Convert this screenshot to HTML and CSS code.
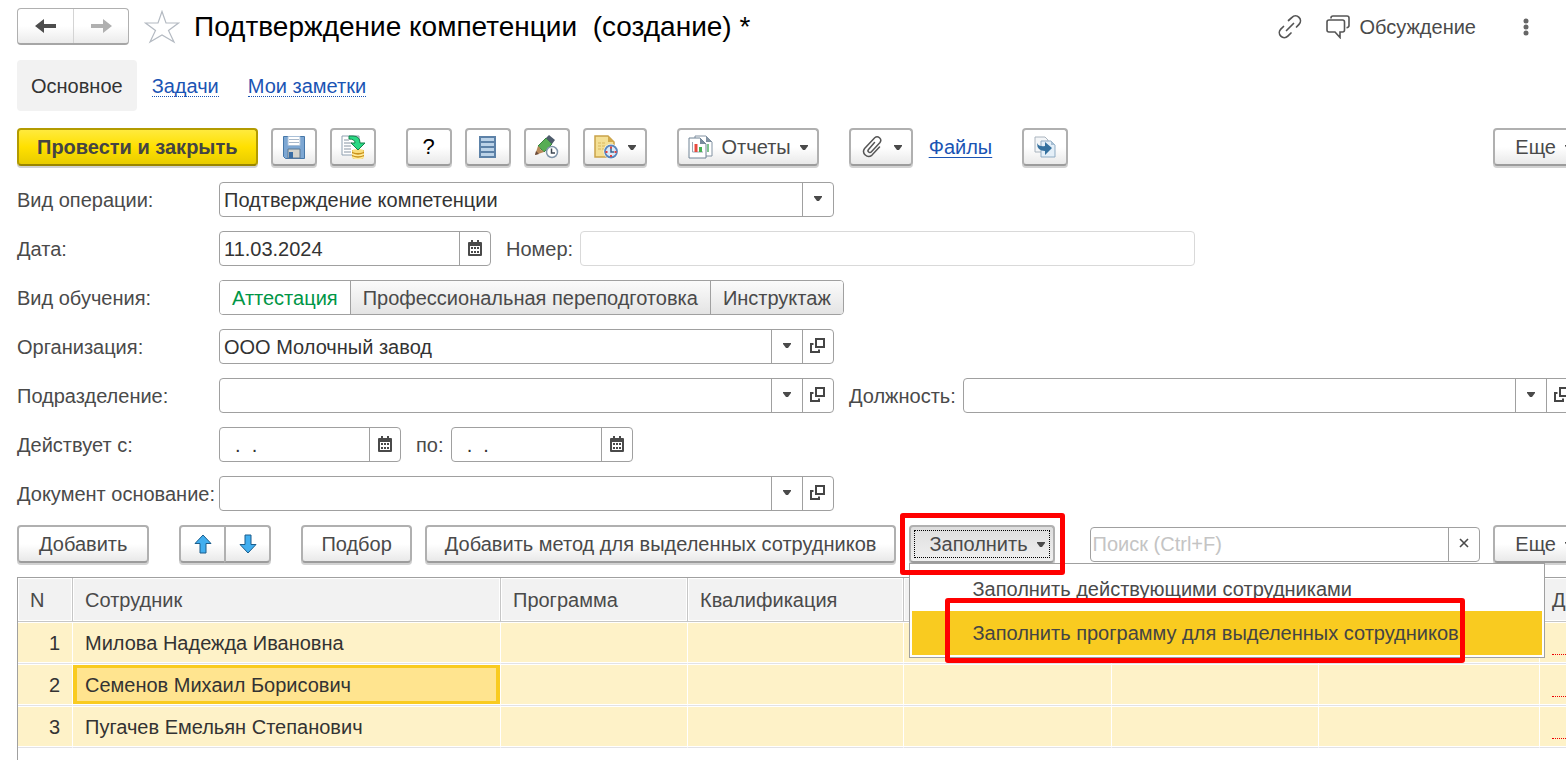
FILE: index.html
```html
<!DOCTYPE html>
<html lang="ru">
<head>
<meta charset="utf-8">
<title>Подтверждение компетенции (создание)</title>
<link rel="stylesheet" href="styles.css">
</head>
<body>
<svg class="sprite" aria-hidden="true">
  <symbol id="caret" viewBox="0 0 8 5"><path d="M0 0h8v1L5 5H3L0 1z" fill="#4a4a4a"/></symbol>
  <symbol id="open" viewBox="0 0 16 16"><path d="M6 1h8v8H6z" fill="none" stroke="#454545" stroke-width="2"/><path d="M3.500 6H1v8h8v-2.500" fill="none" stroke="#454545" stroke-width="2"/></symbol>
  <symbol id="calendar" viewBox="0 0 14 16"><path d="M1 2h2V0h2v2h4V0h2v2h2q1 0 1 1v12q0 1-1 1H1q-1 0-1-1V3q0-1 1-1z" fill="#4a4a4a"/><path d="M2 6h10v8H2z" fill="#fff"/><path d="M3 7h2v2H3zM6 7h2v2H6zM9 7h2v2H9zM3 11h2v2H3zM6 11h2v2H6zM9 11h2v2H9z" fill="#4a4a4a"/></symbol>
</svg>
<main class="page">
  <header class="titlebar">
    <div class="history">
      <button class="history-btn" type="button" aria-label="Назад"><svg width="21" height="16" viewBox="0 0 21 16"><path d="M0 8 9 1v5h12v4H9v5z" fill="#4d4d4d"/></svg></button>
      <button class="history-btn" type="button" aria-label="Вперед"><svg width="21" height="16" viewBox="0 0 21 16"><path d="M21 8 12 1v5H0v4h12v5z" fill="#b0b0b0"/></svg></button>
    </div>
    <button class="plain star" type="button" aria-label="В избранное"><svg width="36" height="34" viewBox="0 0 36 34"><path d="M18 1.500 22 13h12.500L24.500 20.500 30 32 18 25 6 32l5.500-11.500L1.500 13H14z" fill="#fff" stroke="#b4bac2" stroke-width="1.200"/></svg></button>
    <h1 class="title">Подтверждение компетенции  (создание) *</h1>
    <div class="title-tools">
      <button class="plain" type="button" aria-label="Получить ссылку"><svg width="24" height="24" viewBox="0 0 24 24" fill="none" stroke="#555" stroke-width="1.700" stroke-linecap="round"><path d="M8.500 15.500l7-7M10.500 5.500l3.500-3.200a4.700 4.700 0 0 1 7 7L18.500 12M5.500 11.500l-2.700 2.600a4.700 4.700 0 0 0 7 7L13 18"/></svg></button>
      <button class="plain discuss" type="button"><svg width="24" height="24" viewBox="0 0 24 24" fill="none" stroke="#555" stroke-width="1.600"><path d="M5 3.500V3q0-2 2-2h14q2 0 2 2v7.500q0 2-2.500 2.200M3 5h13.500q2 0 2 2v8q0 2-2 2H14v5.500L9 17H3q-2 0-2-2V7q0-2 2-2z"/></svg><span>Обсуждение</span></button>
      <button class="plain kebab" type="button" aria-label="Меню"><svg width="6" height="18" viewBox="0 0 6 18" fill="#666"><circle cx="3" cy="3" r="2.500"/><circle cx="3" cy="9" r="2.500"/><circle cx="3" cy="15" r="2.500"/></svg></button>
    </div>
  </header>

  <nav class="tabs">
    <span class="tab-active">Основное</span>
    <a class="tab-link" href="#tasks">Задачи</a>
    <a class="tab-link" href="#notes">Мои заметки</a>
  </nav>

  <div class="toolbar">
    <div class="group">
      <button class="btn btn-tight btn-primary" type="button">Провести и закрыть</button>
      <button class="btn btn-icon" type="button" aria-label="Записать"><svg width="22" height="23" viewBox="0 0 22 23"><path d="M.500.500h21v22H2.500l-2-2z" fill="#7da7d3" stroke="#4677a8"/><path d="M5 .500h12v9H5z" fill="#fff" stroke="#a9c0d8"/><path d="M6 3.500h10M6 6.500h10" stroke="#a9b9cb"/><path d="M5 13h12v9H5z" fill="#d3d3cd" stroke="#5d7893"/><path d="M6 16h4v6H6z" fill="#3a6ea5"/></svg></button>
      <button class="btn btn-icon" type="button" aria-label="Провести"><svg width="26" height="26" viewBox="0 0 26 26"><path d="M2 2h17v19H2z" fill="#fff" stroke="#8fa0b0"/><path d="M4 6h5M4 9h8M4 12h7M4 15h7M4 18h7" stroke="#8794a2"/><path d="M12 16v7q0 2 6 2t6-2v-7z" fill="#c9921c"/><ellipse cx="18" cy="17" rx="6" ry="2" fill="#f9dd7c"/><path d="M12 20q6 3 12 0M12 23q6 3 12 0" fill="none" stroke="#ffeb9a" stroke-width="1.500"/><path d="M9 2h4q7 0 7 7h5l-7 7-7-7h4q0-4-6-4z" fill="#29d984" stroke="#15804a"/></svg></button>
    </div>
    <div class="group">
      <button class="btn btn-icon help" type="button">?</button>
      <button class="btn btn-icon" type="button" aria-label="Список"><svg width="17" height="22" viewBox="0 0 17 22"><path d="M1 1h15v20H1z" fill="#bcd3e8" stroke="#5d82a8" stroke-width="2"/><path d="M1 6h15M1 11h15M1 16h15" stroke="#5d82a8" stroke-width="2"/></svg></button>
      <button class="btn btn-icon" type="button" aria-label="Подписать"><svg width="25" height="24" viewBox="0 0 25 24"><path d="M4 11 12 3l6 6-8 8z" fill="#56ad55" stroke="#388540"/><path d="m12 3 3-3 6 5-3 4z" fill="#4d5b6b"/><path d="M4 11 1 20l9-3q-1-2-3-2-1-3-3-4z" fill="#b98a5a"/><path d="m1 20 1-4 3 3z" fill="#6a4a3a"/><circle cx="18" cy="17" r="5.500" fill="#fff" stroke="#8095aa" stroke-width="1.500"/><path d="M17.500 13.500V18H21" fill="none" stroke="#3c4651" stroke-width="1.500"/></svg></button>
      <button class="btn btn-menu" type="button" aria-label="Напоминание"><svg width="25" height="24" viewBox="0 0 25 24"><path d="M1 1h13l6 6v15H1z" fill="#f4e096" stroke="#c9a24a" stroke-width="1.500"/><path d="M14 1v6h6z" fill="#d2a94b"/><path d="M4 8h8M4 11h7M4 14h6" stroke="#d8b65c" stroke-dasharray="3 1"/><circle cx="17" cy="16.500" r="7.500" fill="#fff"/><circle cx="17" cy="16.500" r="6" fill="#dce9f8" stroke="#5886bc" stroke-width="1.800"/><path d="M17 13v4h3" fill="none" stroke="#36618f" stroke-width="1.500"/><path d="M16 11.500h2v2h-2zM16 20h2v2h-2zM11.500 16h2v2h-2zM20.500 16h2v2h-2z" fill="#e04343"/></svg><svg class="caret"><use href="#caret"/></svg></button>
    </div>
    <div class="group">
      <button class="btn btn-menu" type="button"><svg width="25" height="24" viewBox="0 0 25 24"><path d="M7 1h11l6 6v14H7z" fill="#fff" stroke="#8292a2"/><path d="M18 1v6h6z" fill="#8292a2"/><path d="M20 9v8" stroke="#7fc38f" stroke-width="2"/><path d="M1 3h11l6 6v14H1z" fill="#fff" stroke="#6f8294"/><path d="M12 3v6h6z" fill="#7a8c9e"/><path d="M4.500 7v10H15" fill="none" stroke="#9aa6b2"/><path d="M8 9v8" stroke="#e84a3e" stroke-width="3"/><path d="M12.500 12v5" stroke="#47b153" stroke-width="3"/></svg><span>Отчеты</span><svg class="caret"><use href="#caret"/></svg></button>
    </div>
    <div class="group">
      <button class="btn btn-menu" type="button" aria-label="Присоединенные файлы"><svg width="25" height="24" viewBox="0 0 25 24" fill="none" stroke="#555" stroke-width="1.500" stroke-linecap="round"><path d="M14.500 7.500 8.500 14.500a1.800 1.800 0 0 0 2.700 2.400L20 7.500a3.600 3.600 0 0 0-5.300-4.800L4.600 13.500a5 5 0 0 0 7.200 6.800L19.500 12"/></svg><svg class="caret"><use href="#caret"/></svg></button>
      <a class="files" href="#files">Файлы</a>
    </div>
    <button class="btn btn-icon" type="button" aria-label="Создать на основании"><svg width="22" height="22" viewBox="0 0 22 22"><path d="M1 1h10l3 3v12H1z" fill="#f4f6f8" stroke="#aab4be"/><path d="M7 5h10l4 4v12H7z" fill="#e4eff8" stroke="#8fabc3"/><path d="M17 5v4h4z" fill="#a7bfd4"/><path d="M3 7q2 4 8 3V6l7 6-7 7v-4Q3 15 3 7z" fill="#35719f"/></svg></button>
    <button class="btn btn-menu btn-more" type="button"><span>Еще</span><svg class="caret"><use href="#caret"/></svg></button>
  </div>

  <form class="form">
    <div class="row">
      <label class="label" for="operation">Вид операции:</label>
      <div class="field field-wide">
        <select class="control" id="operation"><option>Подтверждение компетенции</option></select>
        <span class="addon"><svg class="caret"><use href="#caret"/></svg></span>
      </div>
    </div>
    <div class="row">
      <label class="label" for="date">Дата:</label>
      <div class="field field-date">
        <input class="control" id="date" type="text" value="11.03.2024">
        <button class="addon" type="button" aria-label="Выбрать дату"><svg width="14" height="16"><use href="#calendar"/></svg></button>
      </div>
      <label class="label-next" for="number">Номер:</label>
      <div class="field field-wide field-muted"><input class="control" id="number" type="text"></div>
    </div>
    <div class="row">
      <span class="label" id="kind">Вид обучения:</span>
      <div class="segments" role="radiogroup" aria-labelledby="kind">
        <label class="segment"><input class="segment-input" type="radio" name="kind" checked><span class="segment-text">Аттестация</span></label>
        <label class="segment"><input class="segment-input" type="radio" name="kind"><span class="segment-text">Профессиональная переподготовка</span></label>
        <label class="segment"><input class="segment-input" type="radio" name="kind"><span class="segment-text">Инструктаж</span></label>
      </div>
    </div>
    <div class="row">
      <label class="label" for="org">Организация:</label>
      <div class="field field-wide">
        <input class="control" id="org" type="text" value="ООО Молочный завод">
        <button class="addon" type="button" aria-label="Выбрать"><svg class="caret"><use href="#caret"/></svg></button>
        <button class="addon" type="button" aria-label="Открыть"><svg width="16" height="16"><use href="#open"/></svg></button>
      </div>
    </div>
    <div class="row">
      <label class="label" for="dept">Подразделение:</label>
      <div class="field field-wide">
        <input class="control" id="dept" type="text">
        <button class="addon" type="button" aria-label="Выбрать"><svg class="caret"><use href="#caret"/></svg></button>
        <button class="addon" type="button" aria-label="Открыть"><svg width="16" height="16"><use href="#open"/></svg></button>
      </div>
      <label class="label-next" for="post">Должность:</label>
      <div class="field field-wide">
        <input class="control" id="post" type="text">
        <button class="addon" type="button" aria-label="Выбрать"><svg class="caret"><use href="#caret"/></svg></button>
        <button class="addon" type="button" aria-label="Открыть"><svg width="16" height="16"><use href="#open"/></svg></button>
      </div>
    </div>
    <div class="row">
      <label class="label" for="from">Действует с:</label>
      <div class="field field-period">
        <input class="control" id="from" type="text" value="  .  .">
        <button class="addon" type="button" aria-label="Выбрать дату"><svg width="14" height="16"><use href="#calendar"/></svg></button>
      </div>
      <label class="label-next" for="to">по:</label>
      <div class="field field-period">
        <input class="control" id="to" type="text" value="  .  .">
        <button class="addon" type="button" aria-label="Выбрать дату"><svg width="14" height="16"><use href="#calendar"/></svg></button>
      </div>
    </div>
    <div class="row">
      <label class="label" for="base">Документ основание:</label>
      <div class="field field-wide">
        <input class="control" id="base" type="text">
        <button class="addon" type="button" aria-label="Выбрать"><svg class="caret"><use href="#caret"/></svg></button>
        <button class="addon" type="button" aria-label="Открыть"><svg width="16" height="16"><use href="#open"/></svg></button>
      </div>
    </div>
  </form>

  <div class="toolbar toolbar-table">
    <button class="btn" type="button">Добавить</button>
    <div class="pair">
      <button class="btn btn-arrow" type="button" aria-label="Вверх"><svg width="18" height="20" viewBox="0 0 18 20"><path d="M9 1 17 9.500h-5V19H6V9.500H1z" fill="#41aeef" stroke="#1b5d8c" stroke-linejoin="round"/></svg></button>
      <button class="btn btn-arrow" type="button" aria-label="Вниз"><svg width="18" height="20" viewBox="0 0 18 20"><path d="M9 19 1 10.500h5V1h6v9.500h5z" fill="#41aeef" stroke="#1b5d8c" stroke-linejoin="round"/></svg></button>
    </div>
    <div class="group">
      <button class="btn btn-tight" type="button">Подбор</button>
      <button class="btn btn-tight" type="button">Добавить метод для выделенных сотрудников</button>
      <div class="fill">
        <button class="btn btn-menu btn-pressed" type="button" aria-expanded="true"><span>Заполнить</span><svg class="caret"><use href="#caret"/></svg></button>
        <div class="menu" role="menu">
          <button class="menu-item" type="button" role="menuitem">Заполнить действующими сотрудниками</button>
          <button class="menu-item menu-item-active" type="button" role="menuitem">Заполнить программу для выделенных сотрудников</button>
          <div class="mark mark-item"></div>
        </div>
        <div class="mark mark-button"></div>
      </div>
    </div>
    <div class="field search">
      <input class="control" type="text" placeholder="Поиск (Ctrl+F)" aria-label="Поиск">
      <button class="addon" type="button" aria-label="Очистить"><svg width="10" height="10" viewBox="0 0 10 10"><path d="m1 1 8 8M9 1 1 9" stroke="#4a4a4a" stroke-width="1.600"/></svg></button>
    </div>
    <button class="btn btn-menu btn-more" type="button"><span>Еще</span><svg class="caret"><use href="#caret"/></svg></button>
  </div>

  <div class="grid">
    <table class="table">
      <colgroup><col class="c-num"><col class="c-name"><col class="c-prog"><col class="c-qual"><col class="c-a"><col class="c-b"><col class="c-c"><col class="c-doc"></colgroup>
      <thead><tr><th>N</th><th>Сотрудник</th><th>Программа</th><th>Квалификация</th><th></th><th></th><th></th><th>До</th></tr></thead>
      <tbody>
        <tr><td class="num">1</td><td>Милова Надежда Ивановна</td><td></td><td></td><td></td><td></td><td></td><td><div class="required"></div></td></tr>
        <tr><td class="num">2</td><td class="current">Семенов Михаил Борисович</td><td></td><td></td><td></td><td></td><td></td><td><div class="required"></div></td></tr>
        <tr><td class="num">3</td><td>Пугачев Емельян Степанович</td><td></td><td></td><td></td><td></td><td></td><td><div class="required"></div></td></tr>
      </tbody>
    </table>
  </div>
</main>
</body>
</html>
```
FILE: styles.css
```css
* { box-sizing: border-box; }

body {
  margin: 0;
  background: #fff;
  color: #4a4a4a;
  font: 20px/24px "Liberation Sans", Arial, sans-serif;
}

button, input, select { font: inherit; color: inherit; }
svg { display: block; flex: none; }
.sprite { position: absolute; width: 0; height: 0; }
.caret { width: 8px; height: 5px; }

.page {
  display: flex;
  flex-direction: column;
  min-height: 100vh;
  padding: 8px 0 0 17px;
  overflow: hidden;
}

.plain { padding: 0; border: 0; background: none; }

/* Title bar */
.titlebar { display: flex; align-items: center; height: 37px; padding-right: 37px; }
.history {
  display: flex;
  height: 37px;
  border: 1px solid #b0b0b0;
  border-bottom: 2px solid #a6a6a6;
  border-radius: 4px;
  background: linear-gradient(#fff 50%, #ebebeb);
}
.history-btn {
  display: flex;
  align-items: center;
  justify-content: center;
  width: 55px;
  padding: 0;
  border: 0;
  background: none;
}
.history-btn + .history-btn { border-left: 1px solid #d4d4d4; }
.star { margin: 0 14px 0 15px; }
.title { margin: 0; color: #000; font-size: 28px; font-weight: 400; line-height: 32px; white-space: pre; }
.title-tools { display: flex; align-items: center; gap: 24px; margin-left: auto; }
.discuss { display: flex; align-items: center; gap: 9px; }
.kebab { margin-left: 23px; }

/* Section tabs */
.tabs { display: flex; align-items: center; gap: 29px; margin-top: 15px; }
.tab-active { margin-right: -14px; padding: 14px 14px 13px; border-radius: 4px; background: #f2f2f2; color: #333; }
.tab-link { padding-top: 1px; border-bottom: 1px dotted #1a54b4; color: #1a54b4; line-height: 20px; text-decoration: none; }

/* Command bars */
.toolbar { display: flex; align-items: center; gap: 30px; margin: 17px -21px 0 0; }
.group { display: flex; align-items: center; gap: 13px; }
.btn {
  display: flex;
  align-items: center;
  justify-content: center;
  height: 38px;
  padding: 0 20px;
  border: 2px solid #b0b0b0;
  border-bottom-color: #9c9c9c;
  border-radius: 4px;
  background: linear-gradient(#fff 50%, #e9e9e9);
  box-shadow: 0 2px 0 #d2d2d2;
  white-space: nowrap;
}
.btn-tight { padding: 0 18px; }
.btn-primary {
  border-color: #b39b00;
  border-bottom-color: #998500;
  background: linear-gradient(#ffea3d, #ffe000 50%, #e8cc00);
  color: #444;
  font-weight: 700;
}
.btn-icon { width: 46px; padding: 0; }
.btn-menu { gap: 9px; padding: 0 9px; }
.help { color: #000; font-size: 22px; }
.files { margin-left: 3px; color: #1a54b4; text-decoration: underline; text-underline-offset: 3px; text-decoration-thickness: 1px; }
.btn-more { margin-left: auto; padding: 0 12px 0 20px; }
.toolbar-table { margin-top: 14px; }
.pair { display: flex; }
.btn-arrow { width: 47px; padding: 0; }
.btn-arrow:first-child { border-radius: 4px 0 0 4px; }
.btn-arrow:last-child { margin-left: -2px; border-radius: 0 4px 4px 0; }
.fill { position: relative; }
.btn-pressed {
  padding: 0 8px 0 18px;
  background: linear-gradient(#dedede, #f0f0f0);
  outline: 1px dotted #000;
  outline-offset: -6px;
}
.search { flex: 1; margin: 0 -17px 0 5px; }

/* Drop-down command list */
.menu {
  position: absolute;
  z-index: 2;
  top: 38px;
  left: 0;
  width: 636px;
  padding: 3px 2px 2px;
  border: 1px solid #a0a0a0;
  background: #fff;
}
.menu-item {
  display: block;
  width: 100%;
  height: 44px;
  padding: 0 0 0 60px;
  border: 0;
  background: none;
  text-align: left;
  white-space: nowrap;
}
.menu-item-active { background: #f9cb20; color: #444; }
.mark { position: absolute; z-index: 3; border: 5px solid #f00; border-radius: 3px; pointer-events: none; }
.mark-button { top: -12px; left: -9px; width: 165px; height: 62px; }
.mark-item { top: 34px; left: 35px; width: 520px; height: 65px; }

/* Document fields */
.form { display: flex; flex-direction: column; gap: 14px; margin-top: 16px; }
.row { display: flex; align-items: center; height: 35px; white-space: nowrap; }
.label { flex: none; width: 202px; }
.label-next { flex: none; margin: 0 7px 0 15px; }
.field {
  display: flex;
  height: 35px;
  border: 1px solid #a0a0a0;
  border-radius: 4px;
  background: #fff;
}
.field-wide { flex: none; width: 615px; }
.field-date { width: 272px; }
.field-period { width: 182px; }
.field-muted { border-color: #d9d9d9; }
.control {
  flex: 1;
  min-width: 0;
  padding: 0 4px;
  border: 0;
  outline: 0;
  background: none;
  color: #333;
  appearance: none;
}
.search .control { padding: 0 2px; }
.control::placeholder { color: #c4c4c4; opacity: 1; }
.addon {
  display: flex;
  align-items: center;
  justify-content: center;
  flex: none;
  width: 31px;
  padding: 0 0 2px;
  border: 0;
  border-left: 1px solid #a0a0a0;
  background: none;
}

.segments { display: flex; height: 35px; border: 1px solid #a0a0a0; border-radius: 4px; overflow: hidden; }
.segment { position: relative; display: flex; }
.segment-input { position: absolute; inset: 0; margin: 0; opacity: 0; }
.segment-text {
  display: flex;
  align-items: center;
  padding: 0 12px;
  background: linear-gradient(#fbfbfb, #e4e4e4);
}
.segment + .segment { border-left: 1px solid #a0a0a0; }
.segment-input:checked + .segment-text { background: #fff; color: #009646; }

/* Employees */
.grid { flex: 1; margin: 14px -21px 0 0; border-top: 1px solid #a0a0a0; border-left: 1px solid #a0a0a0; }
.table { width: 100%; table-layout: fixed; border-collapse: separate; border-spacing: 0; }
.c-num { width: 55px; }
.c-name { width: 428px; }
.c-prog { width: 187px; }
.c-qual { width: 216px; }
.c-a { width: 208px; }
.c-b { width: 207px; }
.c-c { width: 221px; }
.table th, .table td { padding: 0 12px; text-align: left; font-weight: 400; white-space: nowrap; }
.table th {
  height: 44px;
  border-right: 1px solid #c6c6c6;
  border-bottom: 1px solid #c6c6c6;
  background: #f2f2f2;
  box-shadow: inset 0 0 0 1px #fff;
}
.table td {
  height: 42px;
  border-right: 1px solid #fff;
  border-bottom: 1px solid #e2e2e6;
  background: #fef2c8;
  box-shadow: inset 0 1px #fff, inset 0 -1px #fff;
  color: #333;
}
.table .num { text-align: right; }
.table .current { background: #ffe48f; box-shadow: inset 0 1px #fff, inset 0 -1px #fff, inset 0 0 0 4px #f9cb20; }
.required { height: 24px; border-bottom: 1px dotted #e00; }
```
